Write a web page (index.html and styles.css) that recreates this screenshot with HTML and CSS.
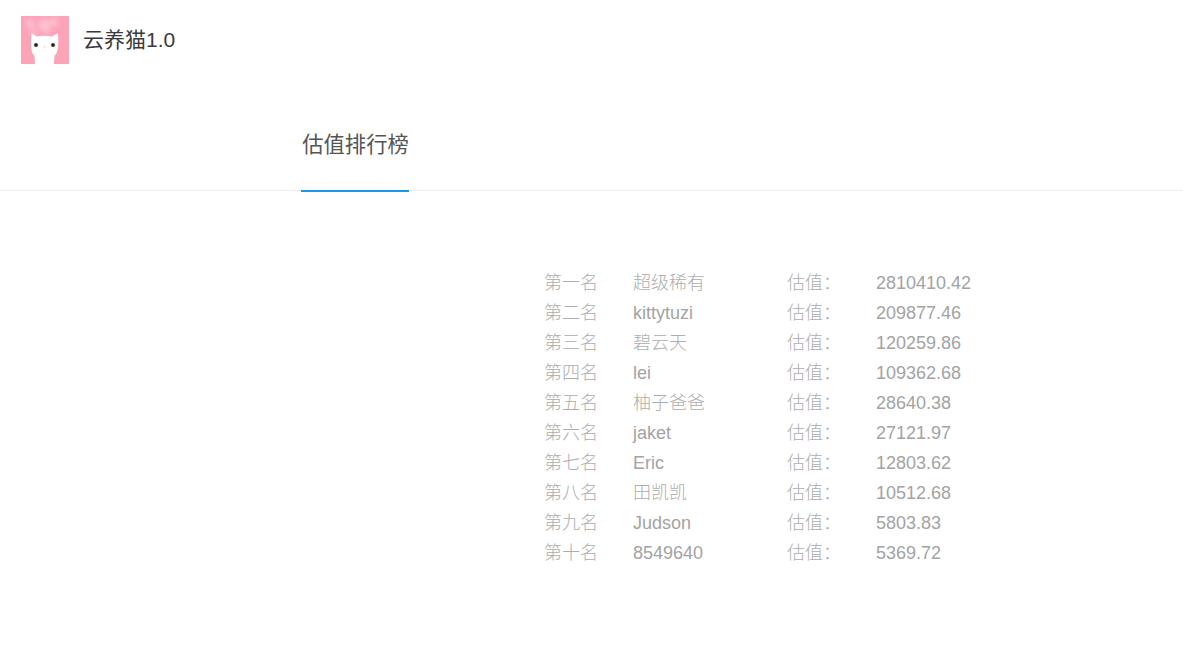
FILE: index.html
```
<!DOCTYPE html>
<html lang="zh-CN">
<head>
<meta charset="utf-8">
<title>云养猫1.0</title>
<link rel="stylesheet" href="styles.css">
</head>
<body>
<header class="brand">
  <svg class="logo" width="48" height="48" viewBox="0 0 48 48">
    <defs>
      <filter id="soft" x="-50%" y="-50%" width="200%" height="200%"><feGaussianBlur stdDeviation="2.500"/></filter>
      <filter id="edge" x="-10%" y="-10%" width="120%" height="120%"><feGaussianBlur stdDeviation="0.500"/></filter>
    </defs>
    <rect width="48" height="48" fill="#fca3b8"/>
    <g fill="#fdc3d0" filter="url(#soft)">
      <circle cx="9" cy="7" r="4"/><circle cx="23" cy="9" r="6"/><circle cx="33" cy="6" r="4"/><circle cx="12" cy="15" r="3"/><circle cx="26" cy="15" r="3"/>
    </g>
    <path d="M14 48L13.500 40C10 36 9.500 31 10.500 17L16 20.500C20 19.500 26 19.500 31 20.500L37 17C38 31 37 36 33.500 40L33 48Z" fill="#fff" filter="url(#edge)"/>
    <circle cx="15" cy="29" r="2.300" fill="#a9b59c"/>
    <circle cx="15" cy="29" r="1.700" fill="#1e1e1e"/>
    <circle cx="32" cy="29" r="2.300" fill="#a9b59c"/>
    <circle cx="32" cy="29" r="1.700" fill="#1e1e1e"/>
    <circle cx="23.500" cy="31" r="0.700" fill="#f4c9c9"/>
  </svg>
  <span class="brand-name">云养猫1.0</span>
</header>
<nav class="tabs">
  <a class="tab">估值排行榜</a>
</nav>
<main class="board">
  <div class="row"><span class="cjk">第一名</span><span class="cjk">超级稀有</span><span class="cjk">估值：</span><span>2810410.42</span></div>
  <div class="row"><span class="cjk">第二名</span><span>kittytuzi</span><span class="cjk">估值：</span><span>209877.46</span></div>
  <div class="row"><span class="cjk">第三名</span><span class="cjk">碧云天</span><span class="cjk">估值：</span><span>120259.86</span></div>
  <div class="row"><span class="cjk">第四名</span><span>lei</span><span class="cjk">估值：</span><span>109362.68</span></div>
  <div class="row"><span class="cjk">第五名</span><span class="cjk">柚子爸爸</span><span class="cjk">估值：</span><span>28640.38</span></div>
  <div class="row"><span class="cjk">第六名</span><span>jaket</span><span class="cjk">估值：</span><span>27121.97</span></div>
  <div class="row"><span class="cjk">第七名</span><span>Eric</span><span class="cjk">估值：</span><span>12803.62</span></div>
  <div class="row"><span class="cjk">第八名</span><span class="cjk">田凯凯</span><span class="cjk">估值：</span><span>10512.68</span></div>
  <div class="row"><span class="cjk">第九名</span><span>Judson</span><span class="cjk">估值：</span><span>5803.83</span></div>
  <div class="row"><span class="cjk">第十名</span><span>8549640</span><span class="cjk">估值：</span><span>5369.72</span></div>
</main>
</body>
</html>
```
FILE: styles.css
```
* { box-sizing: border-box; }
html, body { margin: 0; padding: 0; background: #fff; }
body { font-family: "Liberation Sans", "Noto Sans CJK SC", sans-serif; }
.brand { display: flex; align-items: center; gap: 14px; height: 80px; padding: 0 21px; }
.logo { display: block; flex: none; }
.brand-name { font-size: 21px; line-height: 30px; margin-bottom: 1px; color: #3a3a3a; }
.tabs { height: 111px; padding-left: 301px; border-bottom: 1px solid #ececec; display: flex; }
.tab { display: block; width: 108px; height: 112px; padding: 50px 0 0 1px; line-height: 30px; font-size: 21.300px; text-align: center; color: #555; border-bottom: 2px solid #1a97e6; white-space: nowrap; }
.board { padding: 77px 0 0 544px; }
.row { display: grid; grid-template-columns: 89px 154px 89px auto; height: 30px; line-height: 30px; font-size: 18px; color: #a3a3a3; }
.cjk { color: #adadad; font-weight: 300; }
```
